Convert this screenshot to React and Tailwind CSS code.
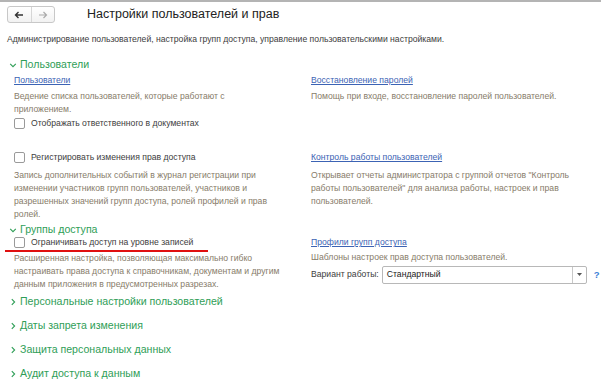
const green = "text-[#2f9e57]";

const Chevron = ({ open }) => (
  <svg width="8" height="8" viewBox="0 0 10 10" className="shrink-0">
    {open ? (
      <path d="M1.5 3.5 L5 7 L8.5 3.5" fill="none" stroke="#2f9e57" strokeWidth="1.4" />
    ) : (
      <path d="M3.5 1.5 L7 5 L3.5 8.5" fill="none" stroke="#2f9e57" strokeWidth="1.4" />
    )}
  </svg>
);

const Section = ({ title, open }) => (
  <div className={`flex items-center gap-[3px] pl-[9px] h-[16px] text-[10.6px] ${green}`}>
    <Chevron open={open} />
    <span>{title}</span>
  </div>
);

const Check = ({ label }) => (
  <div className="flex items-center gap-[6px] h-[13px]">
    <div className="w-[11px] h-[11px] border border-[#9a9a9a] rounded-[2px] bg-white" />
    <span className="text-[#404040]">{label}</span>
  </div>
);

const Link = ({ children }) => (
  <div className="h-[13px] text-[#3c63b4] underline underline-offset-1">{children}</div>
);

const Desc = ({ children, className = "" }) => (
  <div className={`text-[#877c6a] leading-[12.7px] ${className}`}>{children}</div>
);

export default function App() {
  return (
    <div
      className="w-[601px] h-[389px] bg-white overflow-hidden border-t-2 border-[#b4b4b4] text-[8.65px]"
      style={{ fontFamily: "'Liberation Sans', Arial, sans-serif" }}
    >
      <div className="flex items-center pl-[7px] pt-[4px] h-[21px]">
        <div className="flex h-[17px] w-[48px] border border-[#c8c8c8] rounded-[3px] bg-gradient-to-b from-white to-[#f2f2f2]">
          <div className="flex-1 flex items-center justify-center border-r border-[#d6d6d6]">
            <svg width="10" height="8" viewBox="0 0 10 8">
              <path d="M9 4 H2 M4.5 1 L1.5 4 L4.5 7" fill="none" stroke="#333" strokeWidth="1.4" />
            </svg>
          </div>
          <div className="flex-1 flex items-center justify-center">
            <svg width="10" height="8" viewBox="0 0 10 8">
              <path d="M1 4 H8 M5.5 1 L8.5 4 L5.5 7" fill="none" stroke="#aaa" strokeWidth="1.2" />
            </svg>
          </div>
        </div>
        <div className="ml-[32px] text-[12.5px] text-[#222]">Настройки пользователей и прав</div>
      </div>

      <div className="pl-[7px] mt-[10px] text-[#404040]">
        Администрирование пользователей, настройка групп доступа, управление пользовательскими настройками.
      </div>

      <div className="mt-[11px]">
        <Section title="Пользователи" open />
      </div>

      <div className="grid grid-cols-[297px_1fr] pl-[14px] mt-[1px]">
        <div>
          <Link>Пользователи</Link>
          <Desc className="mt-[3px] w-[218px]">Ведение списка пользователей, которые работают с приложением.</Desc>
          <div className="mt-[2px]">
            <Check label="Отображать ответственного в документах" />
          </div>
        </div>
        <div>
          <Link>Восстановление паролей</Link>
          <Desc className="mt-[3px]">Помощь при входе, восстановление паролей пользователей.</Desc>
        </div>

        <div className="mt-[21px]">
          <Check label="Регистрировать изменения прав доступа" />
          <Desc className="mt-[5px] w-[262px]">
            Запись дополнительных событий в журнал регистрации при изменении участников групп пользователей, участников и
            разрешенных значений групп доступа, ролей профилей и прав ролей.
          </Desc>
        </div>
        <div className="mt-[21px]">
          <Link>Контроль работы пользователей</Link>
          <Desc className="mt-[5px] w-[266px]">
            Открывает отчеты администратора с группой отчетов "Контроль работы пользователей" для анализа работы, настроек и прав
            пользователей.
          </Desc>
        </div>
      </div>

      <div className="mt-[2px]">
        <Section title="Группы доступа" open />
      </div>

      <div className="grid grid-cols-[297px_1fr] pl-[14px] mt-[-2px]">
        <div className="relative">
          <Check label="Ограничивать доступ на уровне записей" />
          <div className="absolute left-[-9px] top-[14px] w-[203px] h-[2px] bg-[#e01010]" />
          <Desc className="mt-[3px] w-[276px]">
            Расширенная настройка, позволяющая максимально гибко настраивать права доступа к справочникам, документам и другим
            данным приложения в предусмотренных разрезах.
          </Desc>
        </div>
        <div>
          <Link>Профили групп доступа</Link>
          <Desc className="mt-[2px]">Шаблоны настроек прав доступа пользователей.</Desc>
          <div className="flex items-center mt-[2px] h-[18px]">
            <span className="text-[#404040] mr-[3px] whitespace-nowrap">Вариант работы:</span>
            <div className="flex h-[18px] w-[205px] border border-[#b8b8b8] rounded-[2px]">
              <div className="flex-1 flex items-center pl-[4px] text-[#222]">Стандартный</div>
              <div className="w-[14px] flex items-center justify-center border-l border-[#c8c8c8]">
                <svg width="5" height="3" viewBox="0 0 5 3">
                  <path d="M0 0 H5 L2.5 3 Z" fill="#555" />
                </svg>
              </div>
            </div>
            <span className="ml-[7px] text-[#3c7fd6] font-bold text-[9.5px]">?</span>
          </div>
        </div>
      </div>

      <div className="mt-[4px] flex flex-col gap-[8px]">
        <Section title="Персональные настройки пользователей" />
        <Section title="Даты запрета изменения" />
        <Section title="Защита персональных данных" />
        <Section title="Аудит доступа к данным" />
      </div>
    </div>
  );
}
